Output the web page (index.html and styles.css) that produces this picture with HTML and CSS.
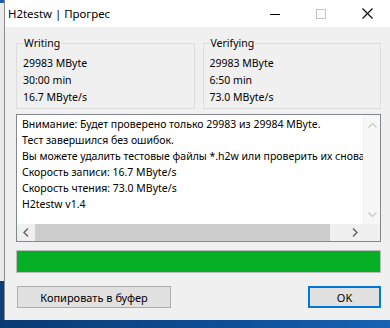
FILE: index.html
```html
<!DOCTYPE html>
<html lang="ru">
<head>
<meta charset="UTF-8">
<meta name="viewport" content="width=device-width, initial-scale=1.0">
<title>H2testw | Прогрес</title>
<link rel="stylesheet" href="styles.css">
</head>
<body>
<div class="screen">
    <div class="behind"></div>
    <div class="window">
        <div class="titlebar">
            <span class="title">H2testw | Прогрес</span>
            <div class="caption">
                <span class="cap-btn">
                    <svg width="10" height="10" viewBox="0 0 10 10"><path d="M0 5.5h10" stroke="#000" stroke-width="1"/></svg>
                </span>
                <span class="cap-btn">
                    <svg width="10" height="10" viewBox="0 0 10 10"><rect x="0.5" y="0.5" width="9" height="9" fill="none" stroke="#c4c4c4" stroke-width="1"/></svg>
                </span>
                <span class="cap-btn">
                    <svg width="11" height="11" viewBox="0 0 11 11"><path d="M0.5 0.5l10 10M10.5 0.5l-10 10" stroke="#000" stroke-width="1.1"/></svg>
                </span>
            </div>
        </div>

        <div class="content">
            <div class="groups">
                <fieldset class="group">
                    <legend>Writing</legend>
                    <div class="line">29983 MByte</div>
                    <div class="line">30:00 min</div>
                    <div class="line">16.7 MByte/s</div>
                </fieldset>
                <fieldset class="group">
                    <legend>Verifying</legend>
                    <div class="line">29983 MByte</div>
                    <div class="line">6:50 min</div>
                    <div class="line">73.0 MByte/s</div>
                </fieldset>
            </div>

            <div class="log">
                <div class="log-text">
                    <div>Внимание: Будет проверено только 29983 из 29984 MByte.</div>
                    <div>Тест завершился без ошибок.</div>
                    <div>Вы можете удалить тестовые файлы *.h2w или проверить их снова.</div>
                    <div>Скорость записи: 16.7 MByte/s</div>
                    <div>Скорость чтения: 73.0 MByte/s</div>
                    <div>H2testw v1.4</div>
                </div>
                <div class="vscroll">
                    <svg width="9" height="6" viewBox="0 0 9 6"><path d="M0.5 5.5l4-4 4 4" fill="none" stroke="#c8c8c8" stroke-width="1.2"/></svg>
                    <svg width="9" height="6" viewBox="0 0 9 6"><path d="M0.5 0.5l4 4 4-4" fill="none" stroke="#c8c8c8" stroke-width="1.2"/></svg>
                </div>
                <div class="hscroll">
                    <span class="arrow">
                        <svg width="6" height="9" viewBox="0 0 6 9"><path d="M5 0.5l-4 4 4 4" fill="none" stroke="#606060" stroke-width="1.4"/></svg>
                    </span>
                    <span class="track"><span class="thumb"></span></span>
                    <span class="arrow">
                        <svg width="6" height="9" viewBox="0 0 6 9"><path d="M1 0.5l4 4-4 4" fill="none" stroke="#606060" stroke-width="1.4"/></svg>
                    </span>
                </div>
                <div class="corner"></div>
            </div>

            <div class="progress"><div class="progress-fill" style="width:100%"></div></div>

            <div class="actions">
                <button class="btn btn-copy">Копировать в буфер</button>
                <button class="btn btn-ok">OK</button>
            </div>
        </div>
    </div>
</div>
</body>
</html>
```

FILE: styles.css
```css
:root{
    --face:#f0f0f0;
    --groupline:#dcdcdc;
    --green:#06b025;
    --blue:#0078d7;
}
html,body{
    margin:0;
    padding:0;
}
body{
    width:390px;
    height:328px;
    overflow:hidden;
    background:linear-gradient(to right,#0a3a72,#0f4f98 60%,#1863b4);
    font-family:"Noto Sans","Liberation Sans",sans-serif;
    color:#000;
}
.screen{
    display:flex;
    height:320px;
}
.behind{
    width:4px;
    flex:none;
    background:linear-gradient(to bottom,#1b5fa8 0,#1b5fa8 3px,#ebebeb 3px,#ebebeb 281px,#0c3e78 281px);
}
.window{
    flex:1;
    display:flex;
    flex-direction:column;
    background:var(--face);
    border-left:1px solid #8c8c8c;
}
.titlebar{
    height:27px;
    flex:none;
    display:flex;
    align-items:center;
    justify-content:space-between;
    background:#fff;
}
.title{
    font-size:11.4px;
    padding-left:3px;
    padding-bottom:1px;
}
.caption{
    display:flex;
    height:100%;
}
.cap-btn{
    width:46px;
    display:flex;
    align-items:center;
    justify-content:center;
}
.content{
    flex:1;
    display:flex;
    flex-direction:column;
    padding:10px 9px 0 11px;
    font-size:10.5px;
}
.groups{
    display:grid;
    grid-template-columns:1fr 1fr;
    gap:8px;
}
.group{
    margin:0;
    min-width:0;
    border:1px solid var(--groupline);
    padding:5px 6px 2px 6px;
}
.group legend{
    padding:0 1px;
    line-height:13px;
}
.line{
    line-height:17px;
}
.log{
    margin-top:5px;
    height:126px;
    border:1px solid #828790;
    display:grid;
    grid-template-columns:1fr 17px;
    grid-template-rows:1fr 17px;
    background:#fff;
}
.log-text{
    overflow:hidden;
    white-space:nowrap;
    padding:1px 0 0 5px;
    line-height:16px;
}
.vscroll{
    background:#f7f7f7;
    border-left:1px solid #efefef;
    display:flex;
    flex-direction:column;
    justify-content:space-between;
    align-items:center;
    padding:7px 0 6px;
}
.hscroll{
    background:var(--face);
    display:flex;
    align-items:stretch;
}
.arrow{
    width:17px;
    flex:none;
    display:flex;
    align-items:center;
    justify-content:center;
}
.track{
    flex:1;
    display:flex;
    padding:0 1px;
}
.thumb{
    width:95%;
    background:#cdcdcd;
}
.corner{
    background:var(--face);
}
.progress{
    margin-top:8px;
    height:21px;
    border:1px solid #bcbcbc;
    background:#e6e6e6;
}
.progress-fill{
    height:100%;
    background:var(--green);
}
.actions{
    margin-top:13px;
    display:flex;
    justify-content:space-between;
}
.btn{
    font-family:inherit;
    font-size:11px;
    height:22px;
    background:#e1e1e1;
    color:#000;
    padding:0;
}
.btn-copy{
    width:154px;
    margin-left:1px;
    border:1px solid #adadad;
}
.btn-ok{
    width:73px;
    border:2px solid var(--blue);
}
```
